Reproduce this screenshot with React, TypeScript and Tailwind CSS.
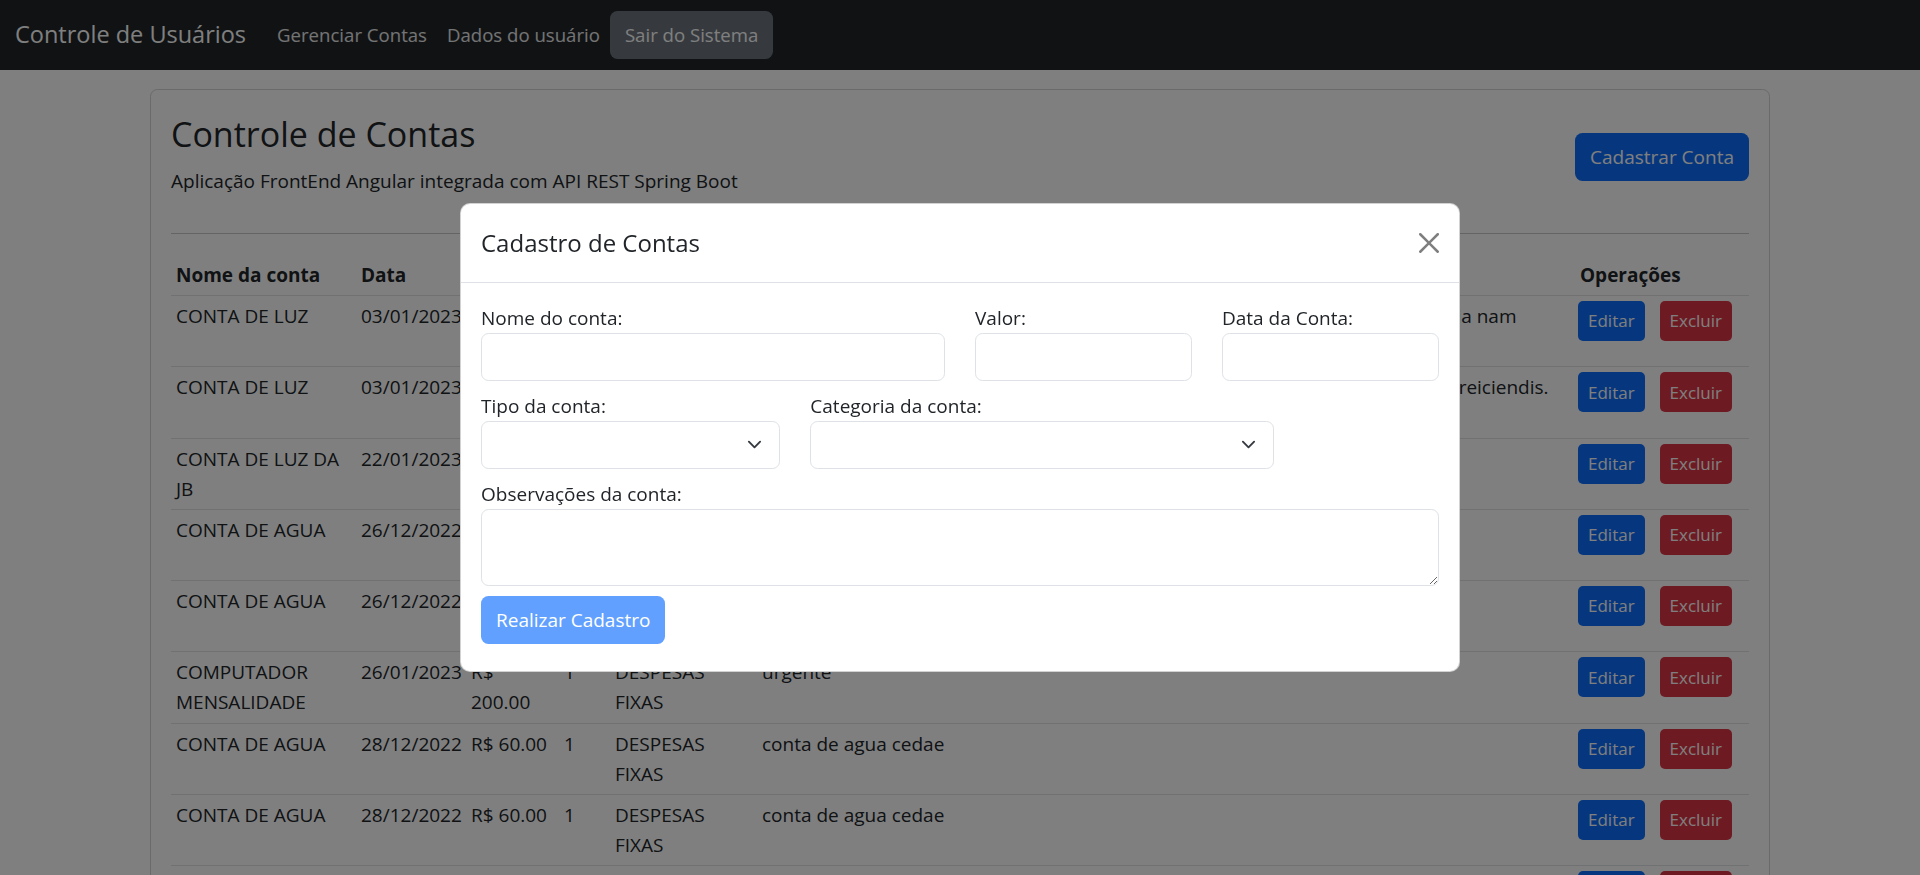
import React from "react";

type Conta = {
  nome: string;
  data: string;
  valor: string;
  tipo: string;
  categoria: string;
  obs: string[];
};

const contas: Conta[] = [
  {
    nome: "CONTA DE LUZ",
    data: "03/01/2023",
    valor: "R$ 150.00",
    tipo: "1",
    categoria: "DESPESAS FIXAS",
    obs: ["Lorem ipsum dolor sit amet consectetur adipisicing elit. Sapiente, explicabo quia nam", "architecto voluptas."],
  },
  {
    nome: "CONTA DE LUZ",
    data: "03/01/2023",
    valor: "R$ 150.00",
    tipo: "1",
    categoria: "DESPESAS FIXAS",
    obs: ["Lorem ipsum dolor sit amet consectetur adipisicing elit. Dolore quam nostrum reiciendis.", "Quas, minima."],
  },
  { nome: "CONTA DE LUZ DA JB", data: "22/01/2023", valor: "R$ 90.00", tipo: "1", categoria: "DESPESAS FIXAS", obs: ["conta de luz"] },
  { nome: "CONTA DE AGUA", data: "26/12/2022", valor: "R$ 60.00", tipo: "1", categoria: "DESPESAS FIXAS", obs: ["conta de agua cedae"] },
  { nome: "CONTA DE AGUA", data: "26/12/2022", valor: "R$ 60.00", tipo: "1", categoria: "DESPESAS FIXAS", obs: ["conta de agua cedae"] },
  { nome: "COMPUTADOR MENSALIDADE", data: "26/01/2023", valor: "R$ 200.00", tipo: "1", categoria: "DESPESAS FIXAS", obs: ["urgente"] },
  { nome: "CONTA DE AGUA", data: "28/12/2022", valor: "R$ 60.00", tipo: "1", categoria: "DESPESAS FIXAS", obs: ["conta de agua cedae"] },
  { nome: "CONTA DE AGUA", data: "28/12/2022", valor: "R$ 60.00", tipo: "1", categoria: "DESPESAS FIXAS", obs: ["conta de agua cedae"] },
  { nome: "CONTA DE AGUA", data: "28/12/2022", valor: "R$ 60.00", tipo: "1", categoria: "DESPESAS FIXAS", obs: ["conta de agua cedae"] },
];

function Chevron() {
  return (
    <svg viewBox="0 0 16 16" className="w-[15px] h-[15px]" fill="none" stroke="#343a40" strokeWidth="2" strokeLinecap="round" strokeLinejoin="round">
      <path d="m2 5 6 6 6-6" />
    </svg>
  );
}

function CloseIcon() {
  return (
    <svg viewBox="0 0 16 16" className="w-[20px] h-[20px] opacity-50" fill="#000">
      <path d="M.293.293a1 1 0 0 1 1.414 0L8 6.586 14.293.293a1 1 0 1 1 1.414 1.414L9.414 8l6.293 6.293a1 1 0 0 1-1.414 1.414L8 9.414l-6.293 6.293a1 1 0 0 1-1.414-1.414L6.586 8 .293 1.707a1 1 0 0 1 0-1.414z" />
    </svg>
  );
}

function Field({ label, span, select }: { label: string; span: string; select?: boolean }) {
  return (
    <div className={span}>
      <label className="block leading-[30px]">{label}</label>
      {select ? (
        <div className="h-[48px] border border-[#dee2e6] rounded-[7.5px] flex items-center justify-end pr-[17px]">
          <Chevron />
        </div>
      ) : (
        <input className="block w-full h-[48px] border border-[#dee2e6] rounded-[7.5px] px-[15px]" />
      )}
    </div>
  );
}

export default function App() {
  return (
    <div className="relative h-[875px] overflow-hidden bg-white text-[#212529] text-[19px] font-['Open_Sans',sans-serif]">
      <nav className="h-[70px] bg-[#212529] flex items-center px-[15px] text-[18.6px]">
        <span className="text-white text-[23.5px] mr-[21px]">Controle de Usuários</span>
        <a className="px-[10px] text-white/90">Gerenciar Contas</a>
        <a className="px-[10px] text-white/90">Dados do usuário</a>
        <button className="h-[48px] px-[15px] rounded-[7.5px] bg-[#6c757d] text-white">Sair do Sistema</button>
      </nav>

      <div className="mx-auto w-[1650px] px-[15px] pt-[19px]">
        <div className="border border-[#d3d4d5] rounded-[7.5px] px-[20px] pt-[20px]">
          <div className="flex items-center justify-between">
            <div>
              <h2 className="text-[34px] leading-[48px] font-medium">Controle de Contas</h2>
              <p className="mt-[8px] leading-[30px]">Aplicação FrontEnd Angular integrada com API REST Spring Boot</p>
            </div>
            <button className="mt-[8px] h-[48px] px-[15px] rounded-[7.5px] bg-[#0d6efd] text-white">Cadastrar Conta</button>
          </div>
          <hr className="mt-[37px] border-t border-[#c8c9ca]" />

          <table className="mt-[21px] w-full table-fixed border-collapse">
            <colgroup>
              <col className="w-[185px]" />
              <col className="w-[110px]" />
              <col className="w-[93px]" />
              <col className="w-[51px]" />
              <col className="w-[147px]" />
              <col />
              <col className="w-[174px]" />
            </colgroup>
            <thead>
              <tr className="border-b border-[#dee2e6]">
                {["Nome da conta", "Data", "Valor", "Tipo", "Categoria", "Observações", "Operações"].map((h) => (
                  <th key={h} className="text-left font-bold px-[5px] py-[5px] leading-[30px]">{h}</th>
                ))}
              </tr>
            </thead>
            <tbody>
              {contas.map((c, i) => (
                <tr key={i} className="border-b border-[#dee2e6] align-top">
                  <td className="px-[5px] py-[5px] leading-[30px]"><div className="min-h-[60.3px]">{c.nome}</div></td>
                  <td className="px-[5px] py-[5px] leading-[30px]">{c.data}</td>
                  <td className="px-[5px] py-[5px] leading-[30px]">{c.valor}</td>
                  <td className="px-[5px] py-[5px] leading-[30px]">{c.tipo}</td>
                  <td className="px-[5px] py-[5px] leading-[30px]">{c.categoria}</td>
                  <td className="px-[5px] py-[5px] leading-[30px]">
                    {c.obs.map((l) => (
                      <span key={l} className="block whitespace-nowrap">{l}</span>
                    ))}
                  </td>
                  <td className="px-[3px] py-[5px]">
                    <div className="flex gap-[15px]">
                      <button className="h-[40px] px-[10px] rounded-[5px] bg-[#0d6efd] text-white text-[17px]">Editar</button>
                      <button className="h-[40px] px-[10px] rounded-[5px] bg-[#dc3545] text-white text-[17px]">Excluir</button>
                    </div>
                  </td>
                </tr>
              ))}
            </tbody>
          </table>
        </div>
      </div>

      <div className="fixed inset-0 bg-black/50" />

      <div className="fixed inset-0 flex items-center justify-center">
        <div className="w-[1000px] bg-white rounded-[10px] border border-black/[.175]">
          <div className="flex items-center justify-between px-[20px] py-[20px] border-b border-[#dee2e6]">
            <h5 className="text-[24px] leading-[37.5px] font-medium">Cadastro de Contas</h5>
            <CloseIcon />
          </div>
          <div className="px-[20px] pt-[20px] pb-[27px]">
            <div className="grid grid-cols-12 gap-x-[30px]">
              <Field label="Nome do conta:" span="col-span-6" />
              <Field label="Valor:" span="col-span-3" />
              <Field label="Data da Conta:" span="col-span-3" />
            </div>
            <div className="grid grid-cols-12 gap-x-[30px] mt-[10px]">
              <Field label="Tipo da conta:" span="col-span-4" select />
              <Field label="Categoria da conta:" span="col-span-6" select />
            </div>
            <div className="mt-[10px]">
              <label className="block leading-[30px]">Observações da conta:</label>
              <textarea rows={2} className="block w-full h-[77px] border border-[#dee2e6] rounded-[7.5px] px-[15px]" />
            </div>
            <button className="mt-[10px] h-[48px] px-[15px] rounded-[7.5px] bg-[#0d6efd] text-white opacity-[.65]">Realizar Cadastro</button>
          </div>
        </div>
      </div>
    </div>
  );
}
